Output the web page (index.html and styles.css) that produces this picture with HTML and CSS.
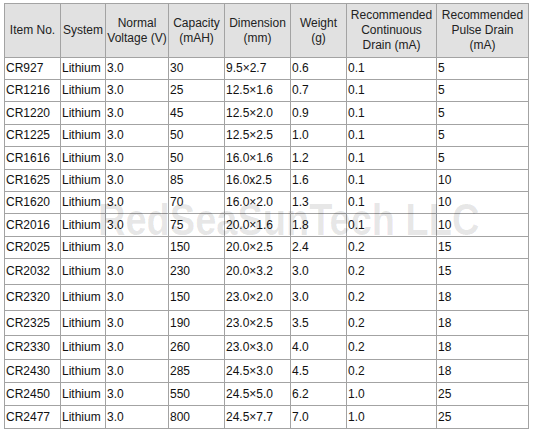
FILE: index.html
```
<!DOCTYPE html>
<html>
<head>
<meta charset="utf-8">
<link rel="stylesheet" href="styles.css">
</head>
<body>
<div class="wrap">
<table class="spec">
<colgroup>
<col class="c1"><col class="c2"><col class="c3"><col class="c4"><col class="c5"><col class="c6"><col class="c7"><col class="c8">
</colgroup>
<thead>
<tr class="head">
<th>Item No.</th>
<th>System</th>
<th>Normal<br>Voltage (V)</th>
<th>Capacity<br>(mAH)</th>
<th>Dimension<br>(mm)</th>
<th>Weight<br>(g)</th>
<th>Recommended<br>Continuous<br>Drain (mA)</th>
<th>Recommended<br>Pulse Drain<br>(mA)</th>
</tr>
</thead>
<tbody>
<tr class="h22"><td>CR927</td><td>Lithium</td><td>3.0</td><td>30</td><td>9.5×2.7</td><td>0.6</td><td>0.1</td><td>5</td></tr>
<tr class="h22"><td>CR1216</td><td>Lithium</td><td>3.0</td><td>25</td><td>12.5×1.6</td><td>0.7</td><td>0.1</td><td>5</td></tr>
<tr class="h23"><td>CR1220</td><td>Lithium</td><td>3.0</td><td>45</td><td>12.5×2.0</td><td>0.9</td><td>0.1</td><td>5</td></tr>
<tr class="h22"><td>CR1225</td><td>Lithium</td><td>3.0</td><td>50</td><td>12.5×2.5</td><td>1.0</td><td>0.1</td><td>5</td></tr>
<tr class="h23"><td>CR1616</td><td>Lithium</td><td>3.0</td><td>50</td><td>16.0×1.6</td><td>1.2</td><td>0.1</td><td>5</td></tr>
<tr class="h22"><td>CR1625</td><td>Lithium</td><td>3.0</td><td>85</td><td>16.0x2.5</td><td>1.6</td><td>0.1</td><td>10</td></tr>
<tr class="h22"><td>CR1620</td><td>Lithium</td><td>3.0</td><td>70</td><td>16.0×2.0</td><td>1.3</td><td>0.1</td><td>10</td></tr>
<tr class="h23"><td>CR2016</td><td>Lithium</td><td>3.0</td><td>75</td><td>20.0×1.6</td><td>1.8</td><td>0.1</td><td>10</td></tr>
<tr class="h22"><td>CR2025</td><td>Lithium</td><td>3.0</td><td>150</td><td>20.0×2.5</td><td>2.4</td><td>0.2</td><td>15</td></tr>
<tr class="h26"><td>CR2032</td><td>Lithium</td><td>3.0</td><td>230</td><td>20.0×3.2</td><td>3.0</td><td>0.2</td><td>15</td></tr>
<tr class="h26"><td>CR2320</td><td>Lithium</td><td>3.0</td><td>150</td><td>23.0×2.0</td><td>3.0</td><td>0.2</td><td>18</td></tr>
<tr class="h25"><td>CR2325</td><td>Lithium</td><td>3.0</td><td>190</td><td>23.0×2.5</td><td>3.5</td><td>0.2</td><td>18</td></tr>
<tr class="h24"><td>CR2330</td><td>Lithium</td><td>3.0</td><td>260</td><td>23.0×3.0</td><td>4.0</td><td>0.2</td><td>18</td></tr>
<tr class="h23"><td>CR2430</td><td>Lithium</td><td>3.0</td><td>285</td><td>24.5×3.0</td><td>4.5</td><td>0.2</td><td>18</td></tr>
<tr class="h23"><td>CR2450</td><td>Lithium</td><td>3.0</td><td>550</td><td>24.5×5.0</td><td>6.2</td><td>1.0</td><td>25</td></tr>
<tr class="h23"><td>CR2477</td><td>Lithium</td><td>3.0</td><td>800</td><td>24.5×7.7</td><td>7.0</td><td>1.0</td><td>25</td></tr>
</tbody>
</table>
<div class="watermark">RedSeaSunTech LLC</div>
</div>
</body>
</html>
```
FILE: styles.css
```
html, body {
  margin: 0;
  padding: 0;
  background: #ffffff;
}
body {
  font-family: "Liberation Sans", Arial, sans-serif;
  font-size: 12px;
  color: #111;
}
.wrap {
  position: relative;
  padding: 3px 0 0 4px;
  width: 524px;
}
.spec {
  border-collapse: collapse;
  table-layout: fixed;
  width: 524px;
}
.c1 { width: 56px; }
.c2 { width: 45px; }
.c3 { width: 63px; }
.c4 { width: 56px; }
.c5 { width: 66px; }
.c6 { width: 56px; }
.c7 { width: 90px; }
.c8 { width: 92px; }
.spec th, .spec td {
  border: 1px solid #a3a3a3;
  padding: 0 0 0 1px;
  line-height: 15px;
  vertical-align: middle;
  white-space: nowrap;
  overflow: hidden;
}
.spec th {
  background: #e1e1e1;
  font-weight: normal;
  text-align: center;
  padding: 0;
  color: #222;
}
.head { height: 54px; }
.spec td { text-align: left; }
.h22 { height: 22px; }
.h23 { height: 23px; }
.h24 { height: 24px; }
.h25 { height: 25px; }
.h26 { height: 26px; }
.watermark {
  position: absolute;
  left: 98px;
  top: 196px;
  font-family: "Liberation Sans", Arial, sans-serif;
  font-weight: bold;
  font-size: 38px;
  color: rgba(0, 0, 0, 0.1);
  transform: scaleY(1.15);
  transform-origin: left top;
  pointer-events: none;
  white-space: nowrap;
}
```
